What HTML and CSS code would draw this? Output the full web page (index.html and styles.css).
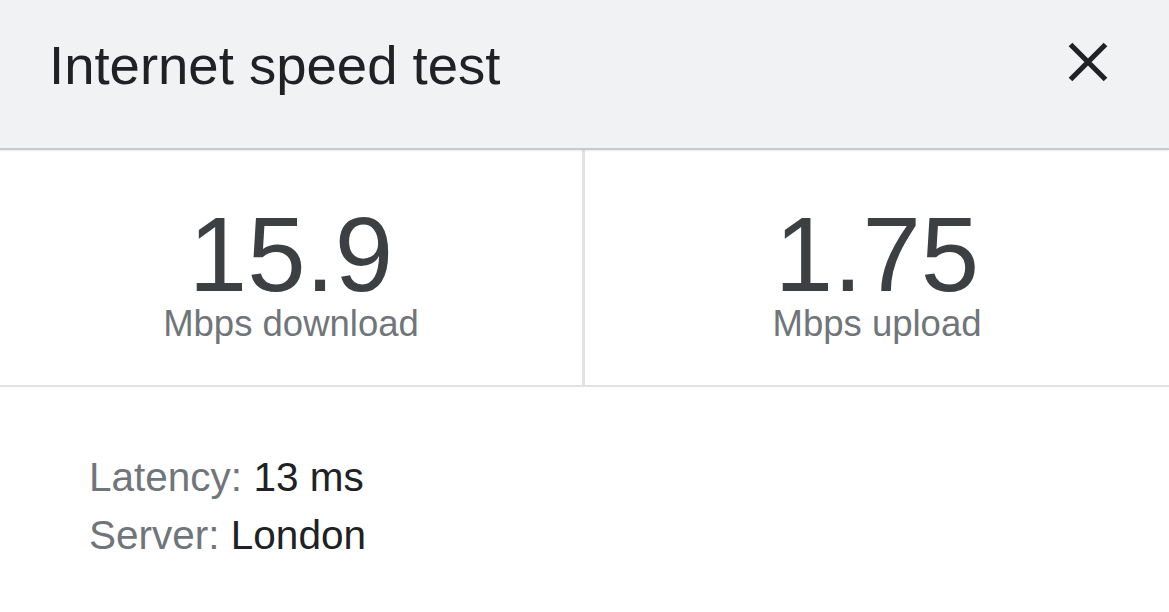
FILE: index.html
```html
<!DOCTYPE html>
<html>
<head>
<meta charset="utf-8">
<title>Internet speed test</title>
<link rel="stylesheet" href="styles.css">
</head>
<body>
<div class="panel">
  <header class="header">
    <h1 class="title">Internet speed test</h1>
    <button class="close" aria-label="Close">
      <svg width="40" height="40" viewBox="0 0 40 40"><path d="M2.5 2.5 L37.5 37.5 M37.5 2.5 L2.5 37.5" stroke="#202124" stroke-width="5.2" fill="none"/></svg>
    </button>
  </header>
  <section class="stats">
    <div class="stat">
      <div class="value">15.9</div>
      <div class="unit">Mbps download</div>
    </div>
    <div class="stat stat-right">
      <div class="value">1.75</div>
      <div class="unit">Mbps upload</div>
    </div>
  </section>
  <section class="info">
    <div class="row"><span class="label">Latency:</span> <span class="val">13 ms</span></div>
    <div class="row"><span class="label">Server:</span> <span class="val">London</span></div>
  </section>
</div>
</body>
</html>
```

FILE: styles.css
```css
html, body {
  margin: 0;
  padding: 0;
  background: #ffffff;
}
body {
  font-family: "Liberation Sans", Arial, Helvetica, sans-serif;
  width: 1169px;
  height: 612px;
  overflow: hidden;
}
.header {
  display: flex;
  align-items: flex-start;
  justify-content: space-between;
  height: 150px;
  box-sizing: border-box;
  padding: 39px 61px 0 49px;
  background: #f1f2f4;
  border-bottom: 2px solid #c9c9cb;
  box-shadow: 0 1px 2px rgba(0, 0, 0, 0.08);
  position: relative;
  z-index: 1;
}
.title {
  margin: 0;
  font-size: 54.5px;
  line-height: 54px;
  font-weight: 400;
  color: #202124;
}
.close {
  margin: 3px 0 0 0;
  padding: 0;
  border: 0;
  background: none;
  width: 40px;
  height: 40px;
  display: block;
}
.close svg {
  display: block;
}
.stats {
  display: grid;
  grid-template-columns: 582px 1fr;
  border-bottom: 2px solid #e2e2e4;
}
.stat {
  display: flex;
  flex-direction: column;
  align-items: center;
  padding: 57px 0 43px;
}
.stat-right {
  border-left: 3px solid #e2e2e4;
}
.value {
  font-size: 105px;
  line-height: 96px;
  color: #3c4043;
}
.unit {
  margin-top: 3px;
  font-size: 36.5px;
  line-height: 36px;
  color: #70757a;
}
.info {
  padding: 61px 0 0 89px;
}
.row {
  font-size: 40.5px;
  line-height: 58px;
}
.label {
  color: #70757a;
}
.val {
  color: #202124;
}
```
